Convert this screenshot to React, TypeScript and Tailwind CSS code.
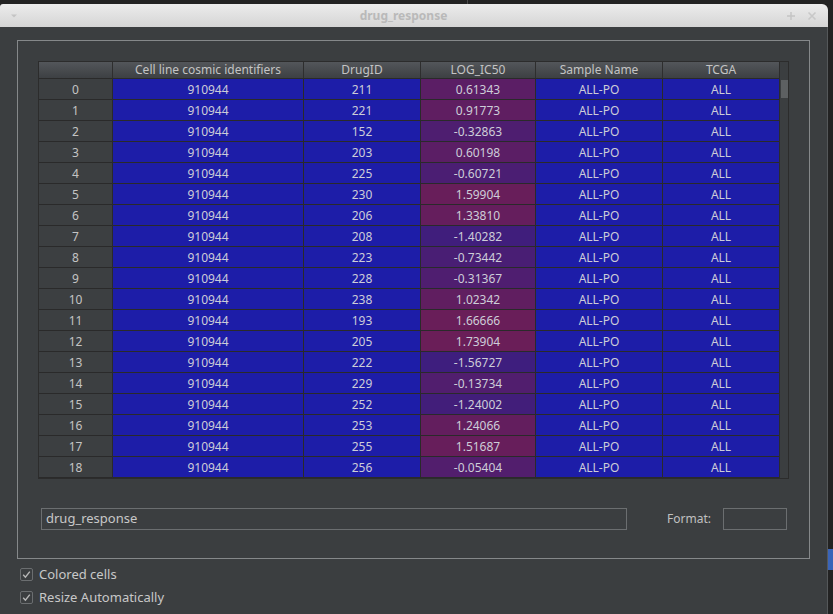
import React from "react";

const rows: [number, number, number][] = [
  [0, 211, 0.61343],
  [1, 221, 0.91773],
  [2, 152, -0.32863],
  [3, 203, 0.60198],
  [4, 225, -0.60721],
  [5, 230, 1.59904],
  [6, 206, 1.3381],
  [7, 208, -1.40282],
  [8, 223, -0.73442],
  [9, 228, -0.31367],
  [10, 238, 1.02342],
  [11, 193, 1.66666],
  [12, 205, 1.73904],
  [13, 222, -1.56727],
  [14, 229, -0.13734],
  [15, 252, -1.24002],
  [16, 253, 1.24066],
  [17, 255, 1.51687],
  [18, 256, -0.05404],
];

const MIN = -1.56727;
const MAX = 1.73904;
function icColor(v: number) {
  const t = (v - MIN) / (MAX - MIN);
  const r = Math.round(62 + (106 - 62) * t);
  const g = 30;
  const b = Math.round(126 + (88 - 126) * t);
  return `rgb(${r},${g},${b})`;
}

function Check() {
  return (
    <div className="w-[13px] h-[13px] border border-[#6b6e70] rounded-[2px] bg-[#3b3e40] flex items-center justify-center">
      <svg width="11" height="11" viewBox="0 0 11 11">
        <path d="M2.2 5.8 L4.4 8.2 L8.8 2.6" fill="none" stroke="#b8b8b8" strokeWidth="1.4" />
      </svg>
    </div>
  );
}

export default function App() {
  return (
    <div
      className="w-[833px] h-[614px] bg-[#1f1f1f] flex flex-col overflow-hidden text-[12px]"
      style={{ fontFamily: '"Noto Sans", "Open Sans", sans-serif' }}
    >
      <div className="h-[4px] bg-[#232323] flex shrink-0">
        <div className="w-[467px]" />
        <div className="w-[1px] bg-[#4a4a4a]" />
      </div>
      <div className="flex flex-1 min-h-0">
        <div className="w-[828px] flex flex-col">
          {/* title bar */}
          <div className="h-[23px] shrink-0 rounded-tl-[3px] rounded-tr-[6px] bg-gradient-to-b from-[#ececec] to-[#d5d5d5] flex items-center px-[9px] relative">
            <svg width="10" height="10" viewBox="0 0 10 10" className="mt-[1px]">
              <path d="M2 3.5 L5 6.5 L8 3.5 Z" fill="#c4c4c4" />
            </svg>
            <div className="flex-1 text-center font-bold text-[#b9b9b9] text-[12px] pl-[2px]">drug_response</div>
            <div className="flex items-center gap-[11px] pr-[2px]">
              <svg width="10" height="10" viewBox="0 0 10 10">
                <path d="M5 1 V9 M1 5 H9" stroke="#c4c4c4" strokeWidth="1.4" />
              </svg>
              <svg width="10" height="10" viewBox="0 0 10 10">
                <path d="M1.5 1.5 L8.5 8.5 M8.5 1.5 L1.5 8.5" stroke="#c8c8c8" strokeWidth="1.6" />
              </svg>
            </div>
          </div>
          {/* body */}
          <div className="flex-1 bg-[#3b3e40] pt-[13px] pl-[17px] pr-[17px] flex flex-col border-r border-[#55585a]">
            <div className="h-[519px] border border-[#85888a] pt-[20px] pl-[20px] flex flex-col">
              {/* table */}
              <div className="w-[751px] h-[418px] border border-[#2c2c2c] flex overflow-hidden">
                <div className="w-[740px] flex flex-col">
                  <div className="h-[17px] shrink-0 flex bg-gradient-to-b from-[#53565a] to-[#3d4043] border-b border-[#2a2a2a] text-[#c4c4c4]">
                    <div className="w-[74px] border-r border-[#2e2e2e]" />
                    <div className="w-[191px] border-r border-[#2e2e2e] flex items-center justify-center leading-none">Cell line cosmic identifiers</div>
                    <div className="w-[117px] border-r border-[#2e2e2e] flex items-center justify-center leading-none">DrugID</div>
                    <div className="w-[115px] border-r border-[#2e2e2e] flex items-center justify-center leading-none">LOG_IC50</div>
                    <div className="w-[127px] border-r border-[#2e2e2e] flex items-center justify-center leading-none">Sample Name</div>
                    <div className="w-[116px] flex items-center justify-center leading-none">TCGA</div>
                  </div>
                  {rows.map(([i, d, v]) => (
                    <div key={i} className="h-[21px] shrink-0 flex border-b border-[#2a2a2a] text-[#cdcdd8]">
                      <div className="w-[74px] pt-[1px] bg-[#3c3f41] border-r border-[#2a2a2a] flex items-center justify-center text-[#c4c4c4]">{i}</div>
                      <div className="w-[191px] pt-[1px] bg-[#1d1da8] border-r border-[#2a2a2a] flex items-center justify-center">910944</div>
                      <div className="w-[117px] pt-[1px] bg-[#1d1da8] border-r border-[#2a2a2a] flex items-center justify-center">{d}</div>
                      <div className="w-[115px] pt-[1px] border-r border-[#2a2a2a] flex items-center justify-center" style={{ backgroundColor: icColor(v) }}>
                        {v.toFixed(5)}
                      </div>
                      <div className="w-[127px] pt-[1px] bg-[#1d1da8] border-r border-[#2a2a2a] flex items-center justify-center">ALL-PO</div>
                      <div className="w-[116px] pt-[1px] bg-[#1d1da8] flex items-center justify-center">ALL</div>
                    </div>
                  ))}
                  <div className="h-[6px] shrink-0 flex">
                    <div className="w-[74px] bg-[#3c3f41] border-r border-[#2a2a2a]" />
                    <div className="w-[191px] bg-[#1d1da8] border-r border-[#2a2a2a]" />
                    <div className="w-[117px] bg-[#1d1da8] border-r border-[#2a2a2a]" />
                    <div className="w-[115px] bg-[#4a1d70] border-r border-[#2a2a2a]" />
                    <div className="w-[127px] bg-[#1d1da8] border-r border-[#2a2a2a]" />
                    <div className="w-[116px] bg-[#1d1da8]" />
                  </div>
                </div>
                <div className="w-[9px] bg-[#3b3e40] border-l border-[#2c2c2c] pt-[18px] pl-[1px]">
                  <div className="w-[7px] h-[18px] bg-[#5d6062]" />
                </div>
              </div>
              {/* bottom controls */}
              <div className="mt-[29px] flex items-center">
                <div className="ml-[3px] w-[586px] h-[22px] border border-[#6b6e70] flex items-center pl-[4px] text-[#c8c8c8] text-[13px]">
                  drug_response
                </div>
                <div className="ml-[40px] text-[#c0c0c0] text-[12px]">Format:</div>
                <div className="ml-[12px] w-[64px] h-[22px] border border-[#6b6e70]" />
              </div>
            </div>
            <div className="pl-[3px] pt-[9px] flex flex-col gap-[10px] text-[#c8c8c8] text-[13px]">
              <div className="flex items-center gap-[6px] h-[13px]">
                <Check />
                <span>Colored cells</span>
              </div>
              <div className="flex items-center gap-[6px] h-[13px]">
                <Check />
                <span>Resize Automatically</span>
              </div>
            </div>
          </div>
        </div>
        <div className="w-[5px] bg-[#232323] flex flex-col">
          <div className="h-[545px]" />
          <div className="h-[21px] bg-[#3a64b8]" />
        </div>
      </div>
    </div>
  );
}
